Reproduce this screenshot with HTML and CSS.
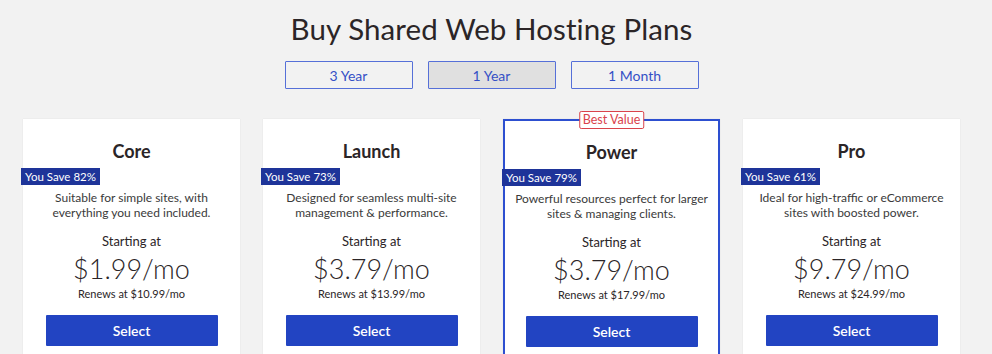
FILE: index.html
```html
<!DOCTYPE html>
<html lang="en">
<head>
    <meta charset="UTF-8">
    <meta name="viewport" content="width=device-width, initial-scale=1.0">
    <title>Buy Shared Web Hosting Plans</title>
    <link rel="stylesheet" href="styles.css">
</head>
<body>
    <div class="page">
        <h1>Buy Shared Web Hosting Plans</h1>
        <div class="terms">
            <button class="term">3 Year</button>
            <button class="term active">1 Year</button>
            <button class="term">1 Month</button>
        </div>
        <div class="plans">
            <div class="plan">
                <h2>Core</h2>
                <div class="save">You Save 82%</div>
                <p class="desc">Suitable for simple sites, with everything you need included.</p>
                <div class="starting">Starting at</div>
                <div class="price">$1.99<span>/mo</span></div>
                <div class="renews">Renews at $10.99/mo</div>
                <button class="select">Select</button>
            </div>
            <div class="plan">
                <h2>Launch</h2>
                <div class="save">You Save 73%</div>
                <p class="desc">Designed for seamless multi-site management &amp; performance.</p>
                <div class="starting">Starting at</div>
                <div class="price">$3.79<span>/mo</span></div>
                <div class="renews">Renews at $13.99/mo</div>
                <button class="select">Select</button>
            </div>
            <div class="plan featured">
                <div class="best">Best Value</div>
                <h2>Power</h2>
                <div class="save">You Save 79%</div>
                <p class="desc">Powerful resources perfect for larger sites &amp; managing clients.</p>
                <div class="starting">Starting at</div>
                <div class="price">$3.79<span>/mo</span></div>
                <div class="renews">Renews at $17.99/mo</div>
                <button class="select">Select</button>
            </div>
            <div class="plan">
                <h2>Pro</h2>
                <div class="save">You Save 61%</div>
                <p class="desc">Ideal for high-traffic or eCommerce sites with boosted power.</p>
                <div class="starting">Starting at</div>
                <div class="price">$9.79<span>/mo</span></div>
                <div class="renews">Renews at $24.99/mo</div>
                <button class="select">Select</button>
            </div>
        </div>
    </div>
</body>
</html>
```

FILE: styles.css
```css
body { margin: 0; background-color: #f2f2f2; font-family: "Lato", "Open Sans", sans-serif; color: #2b2527; overflow: hidden; }
.page { padding: 12px 32px 0 23px; }
h1 { margin: 0; text-align: center; font-size: 29.5px; font-weight: 400; line-height: 34px; letter-spacing: 0.1px; }
.terms { display: flex; justify-content: center; gap: 15px; margin-top: 15px; }
.term { width: 128px; height: 28px; background: transparent; border: 1px solid #5670d8; border-radius: 1px; color: #3550c6; font-family: "Lato", sans-serif; font-size: 14px; padding: 0; }
.term.active { background-color: #e0e0e0; }
.plans { display: flex; gap: 23px; margin-top: 30px; }
.plan { position: relative; width: 217px; height: 260px; background: #fff; box-sizing: border-box; text-align: center; padding-top: 21px; box-shadow: 0 0 1px rgba(0,0,0,0.12); }
.plan h2 { margin: 0; font-size: 18px; font-weight: 700; line-height: 22px; }
.save { width: 79px; margin: 6px 0 0 -2px; background-color: #1e3499; color: #fff; font-size: 11.5px; line-height: 17px; text-align: center; }
.desc { margin: 5px 6px 0; font-size: 12px; line-height: 15px; color: #3a3a3a; }
.starting { margin-top: 13px; font-size: 13px; line-height: 16px; }
.price { margin-top: 4px; font-size: 27px; font-weight: 300; line-height: 32px; }
.renews { margin-top: 2px; font-size: 11px; line-height: 14px; }
.select { display: block; width: 172px; height: 31px; margin: 14px auto 0; background-color: #2244c2; color: #fff; border: none; border-radius: 1px; font-family: "Lato", sans-serif; font-size: 14px; font-weight: 600; }
.featured { border: 2px solid #2d4fd0; padding-top: 20px; }
.featured .save { margin-left: -3px; }
.best { position: absolute; top: -10px; left: 50%; transform: translateX(-50%); background: #fff; border: 1px solid #d9434b; border-radius: 2px; color: #d9434b; font-size: 12.5px; line-height: 16px; padding: 0 3px; white-space: nowrap; }
```
